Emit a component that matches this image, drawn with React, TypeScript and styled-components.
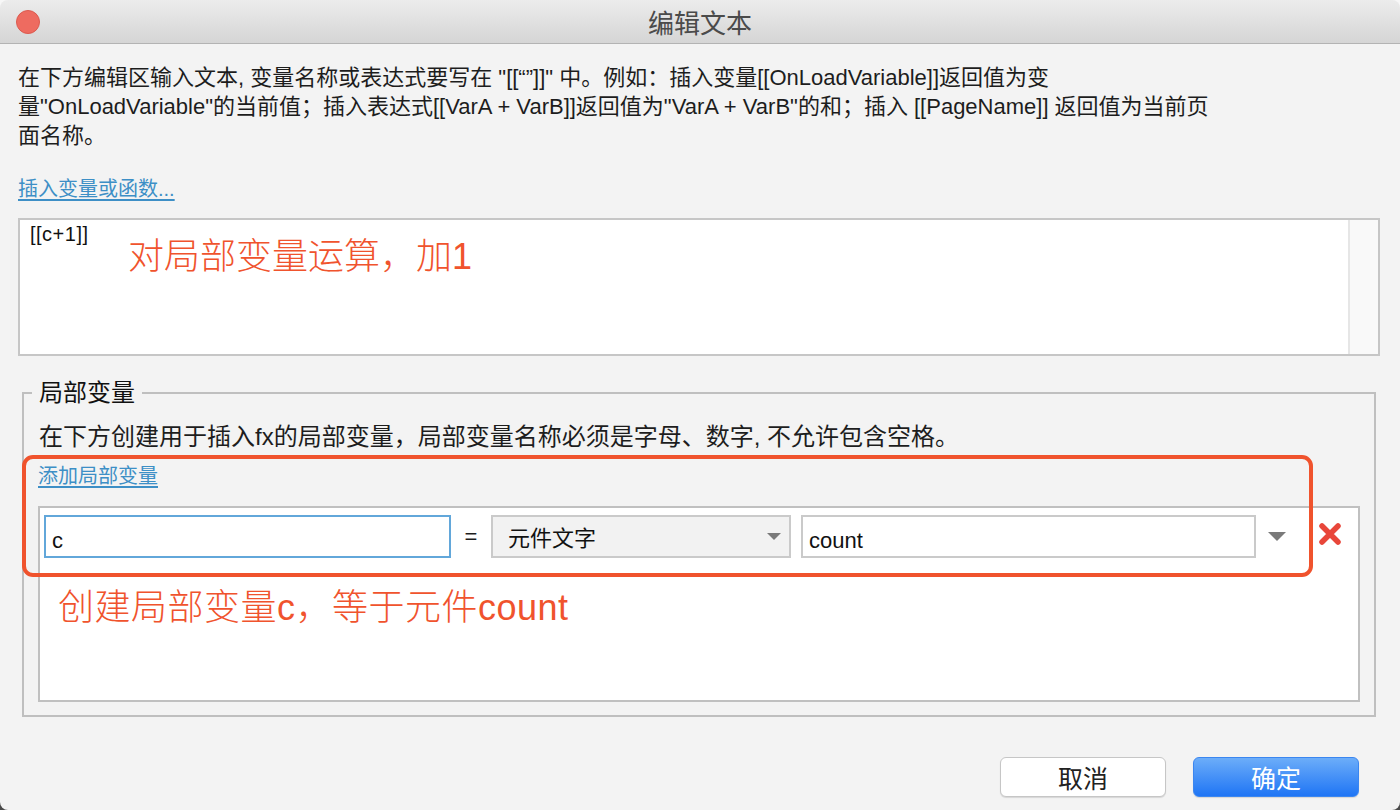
import React from "react";
import styled, { createGlobalStyle } from "styled-components";

const GlobalStyle = createGlobalStyle`
  html, body {
    margin: 0;
    padding: 0;
  }
  body {
    width: 1400px;
    height: 810px;
    overflow: hidden;
    background: linear-gradient(#f7f7f7 0 50%, #4a4a4a 50% 100%);
    font-family: "Liberation Sans", "Noto Sans CJK SC", sans-serif;
    color: #1d1d1d;
  }
  * { box-sizing: border-box; }
`;

const ACCENT = "#f0532d";
const LINK = "#3d8fc6";

const Window = styled.div`
  width: 1400px;
  height: 810px;
  background: #f3f3f3;
  border-radius: 8px;
  overflow: hidden;
  display: flex;
  flex-direction: column;
`;

const TitleBar = styled.header`
  flex: none;
  height: 44px;
  display: grid;
  grid-template-columns: 1fr auto 1fr;
  align-items: center;
  padding: 0 16px;
  background: linear-gradient(#ececec, #d5d5d5);
  border-bottom: 1px solid #b3b3b3;
`;

const CloseDot = styled.span`
  justify-self: start;
  width: 24px;
  height: 24px;
  border-radius: 50%;
  background: #ee6b60;
  border: 1px solid #dc5a4f;
`;

const Title = styled.h1`
  margin: 0;
  font-family: "Noto Sans CJK SC", sans-serif;
  font-weight: 400;
  font-size: 26px;
  line-height: 1;
  color: #4b4b4b;
`;

const Body = styled.main`
  flex: 1;
  display: flex;
  flex-direction: column;
  padding: 19px 20px 0 18px;
`;

const Description = styled.p`
  margin: 0;
  font-size: 22px;
  line-height: 29px;
`;

const Line = styled.span`
  display: block;
  white-space: nowrap;
`;

const TextLink = styled.a`
  align-self: flex-start;
  font-size: 20px;
  line-height: 29px;
  color: ${LINK};
  text-decoration: underline;
  text-underline-offset: 3px;
  cursor: pointer;
`;

const InsertLink = styled(TextLink)`
  margin-top: 25px;
`;

const Editor = styled.div`
  position: relative;
  margin-top: 14px;
  height: 138px;
  display: grid;
  grid-template-columns: 1fr 30px;
  background: #fff;
  border: 2px solid #c6c6c6;
`;

const EditorText = styled.div`
  padding: 2px 10px;
  font-size: 20px;
  line-height: 24px;
  letter-spacing: 0.5px;
  color: #111;
`;

const ScrollTrack = styled.div`
  background: #f9f9f9;
  border-left: 2px solid #e6e6e6;
`;

const Note = styled.div`
  font-family: "Liberation Sans", "Noto Sans CJK SC", sans-serif;
  font-weight: 300;
  font-size: 36px;
  line-height: 44px;
  color: ${ACCENT};
  white-space: nowrap;
`;

const EditorNote = styled(Note)`
  position: absolute;
  left: 108px;
  top: 15px;
`;

const Group = styled.fieldset`
  margin: 22px 4px 0;
  padding: 0 14px 13px;
  border: 2px solid #bfbfbf;
  min-width: 0;
`;

const GroupTitle = styled.legend`
  margin-left: -6px;
  padding: 0 7px;
  font-size: 24px;
  line-height: 29px;
  color: #111;
`;

const GroupHint = styled.p`
  margin: 15px 0 0 1px;
  font-size: 24px;
  line-height: 29px;
  white-space: nowrap;
`;

const VarArea = styled.div`
  position: relative;
  margin-top: 11px;
  display: flex;
  flex-direction: column;
`;

const Highlight = styled.div`
  position: absolute;
  left: -16px;
  top: -7px;
  width: 1291px;
  height: 122px;
  border: 4px solid ${ACCENT};
  border-radius: 11px;
  pointer-events: none;
`;

const VarTable = styled.div`
  margin-top: 15px;
  height: 196px;
  padding: 6px 4px 0;
  background: #fff;
  border: 2px solid #c0c0c0;
`;

const VarRow = styled.div`
  display: flex;
  align-items: center;
  height: 44px;
`;

const Field = styled.div<{ $width: number; $focus?: boolean; $tinted?: boolean; $gap?: number }>`
  flex: none;
  width: ${(p) => p.$width}px;
  height: 43px;
  margin-left: ${(p) => p.$gap ?? 0}px;
  display: flex;
  align-items: center;
  justify-content: space-between;
  padding: 9px 8px 0 6px;
  font-size: 22px;
  color: #111;
  background: ${(p) => (p.$tinted ? "#f2f2f2" : "#fff")};
  border: 2px solid ${(p) => (p.$focus ? "#62a7da" : "#cacaca")};
`;

const SelectField = styled(Field)`
  padding: 0 8px 0 15px;
  font-family: "Noto Sans CJK SC", sans-serif;
`;

const Equals = styled.span`
  flex: none;
  width: 40px;
  text-align: center;
  font-size: 22px;
  padding-top: 2px;
`;

const ComboArrow = styled.span`
  flex: none;
  display: flex;
  margin-left: 12px;
`;

const RemoveButton = styled.button`
  flex: none;
  display: flex;
  margin-left: 32px;
  margin-top: -4px;
  padding: 0;
  border: 0;
  background: none;
  cursor: pointer;
`;

const TableNote = styled(Note)`
  margin: 28px 0 0 14px;
  letter-spacing: 0.5px;
`;

const Footer = styled.footer`
  margin: 40px 21px 0 0;
  display: flex;
  justify-content: flex-end;
  gap: 27px;
`;

const PushButton = styled.button<{ $primary?: boolean }>`
  width: 166px;
  height: 40px;
  border-radius: 6px;
  font-family: "Noto Sans CJK SC", sans-serif;
  font-size: 25px;
  line-height: 1;
  cursor: pointer;
  color: ${(p) => (p.$primary ? "#fff" : "#222")};
  background: ${(p) =>
    p.$primary ? "linear-gradient(#6cadf9, #1f75f5)" : "#fff"};
  border: 1px solid ${(p) => (p.$primary ? "#3b86f0" : "#c6c6c6")};
  box-shadow: 0 1px 1px rgba(0, 0, 0, 0.12);
`;

const Caret = ({ w }: { w: number }) => (
  <svg width={w} height={Math.round(w / 2)} viewBox="0 0 14 7">
    <polygon points="0,0 14,0 7,7" fill="#7a7a7a" />
  </svg>
);

const Cross = () => (
  <svg width="24" height="24" viewBox="0 0 24 24">
    <path
      d="M4 4 L20 20 M20 4 L4 20"
      stroke="#e8463a"
      strokeWidth="5.5"
      strokeLinecap="round"
    />
  </svg>
);

export default function App() {
  return (
    <>
      <GlobalStyle />
      <Window>
        <TitleBar>
          <CloseDot />
          <Title>编辑文本</Title>
          <span />
        </TitleBar>
        <Body>
          <Description>
            <Line>
              在下方编辑区输入文本, 变量名称或表达式要写在 "[[“”]]" 中。例如：插入变量[[OnLoadVariable]]返回值为变
            </Line>
            <Line>
              量"OnLoadVariable"的当前值；插入表达式[[VarA + VarB]]返回值为"VarA + VarB"的和；插入 [[PageName]] 返回值为当前页
            </Line>
            <Line>面名称。</Line>
          </Description>
          <InsertLink>插入变量或函数...</InsertLink>
          <Editor>
            <EditorText>[[c+1]]</EditorText>
            <ScrollTrack />
            <EditorNote>对局部变量运算，加1</EditorNote>
          </Editor>
          <Group>
            <GroupTitle>局部变量</GroupTitle>
            <GroupHint>
              在下方创建用于插入fx的局部变量，局部变量名称必须是字母、数字, 不允许包含空格。
            </GroupHint>
            <VarArea>
              <Highlight />
              <TextLink>添加局部变量</TextLink>
              <VarTable>
                <VarRow>
                  <Field $width={407} $focus>
                    c
                  </Field>
                  <Equals>=</Equals>
                  <SelectField $width={300} $tinted>
                    元件文字
                    <Caret w={14} />
                  </SelectField>
                  <Field $width={455} $gap={10}>
                    count
                  </Field>
                  <ComboArrow>
                    <Caret w={18} />
                  </ComboArrow>
                  <RemoveButton aria-label="删除">
                    <Cross />
                  </RemoveButton>
                </VarRow>
                <TableNote>创建局部变量c，等于元件count</TableNote>
              </VarTable>
            </VarArea>
          </Group>
          <Footer>
            <PushButton>取消</PushButton>
            <PushButton $primary>确定</PushButton>
          </Footer>
        </Body>
      </Window>
    </>
  );
}
